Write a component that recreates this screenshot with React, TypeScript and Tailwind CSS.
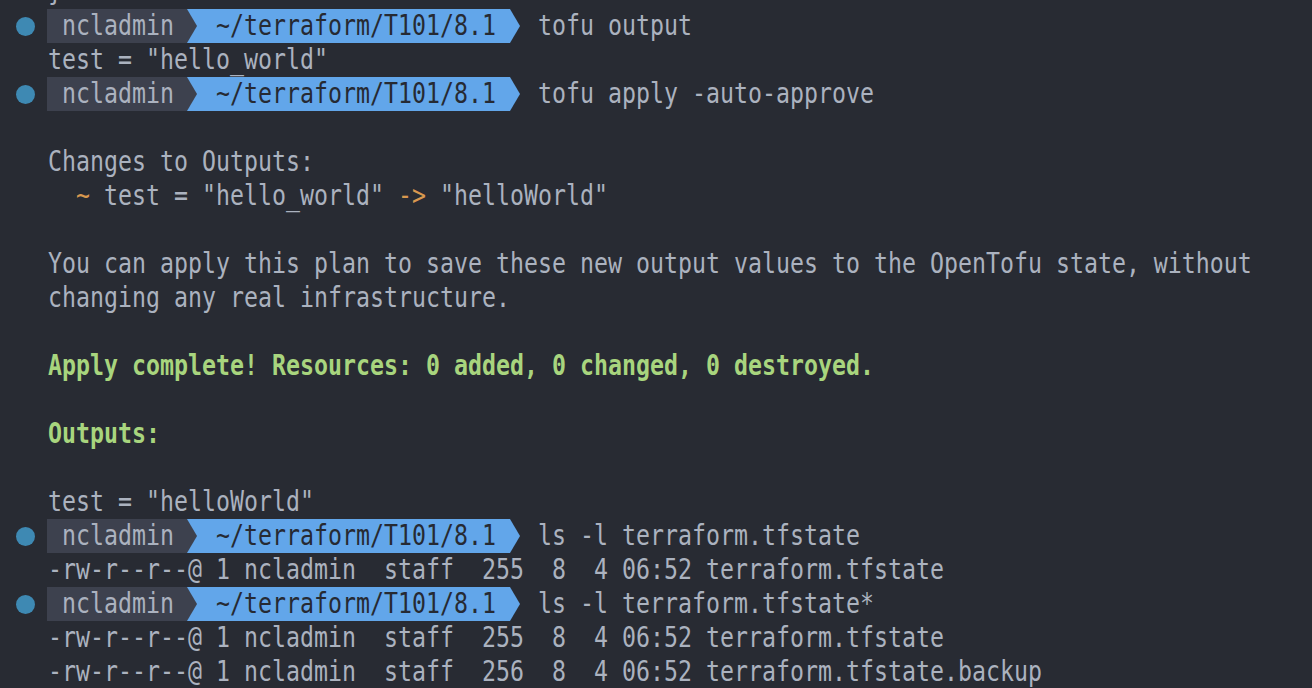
import React from "react";

const FONT = "font-['DejaVu_Sans_Mono',monospace] text-[28px] leading-[34px]";

function S({ children, className = "" }: { children: React.ReactNode; className?: string }) {
  return (
    <span className={"inline-block origin-left scale-x-[0.8304] whitespace-pre " + className}>
      {children}
    </span>
  );
}

function Line({ children }: { children?: React.ReactNode }) {
  return (
    <div className="h-[34px] pl-[48px] whitespace-pre overflow-visible">
      <S>{children ?? " "}</S>
    </div>
  );
}

function Prompt({ cmd }: { cmd: string }) {
  return (
    <div className="h-[34px] flex items-stretch">
      <div className="w-[47px] shrink-0 flex items-center">
        <div className="ml-[15.5px] w-[19px] h-[19px] rounded-full bg-[#3e89b3]" />
      </div>
      <div className="relative z-10 w-[150px] shrink-0 bg-[#3d414e] pl-[15px] text-[#abb2bf] [clip-path:polygon(0_0,140px_0,150px_50%,140px_100%,0_100%)]">
        <S>ncladmin</S>
      </div>
      <div className="-ml-[10px] w-[333px] shrink-0 bg-[#62a6ea] pl-[29px] text-[#262a33] [clip-path:polygon(0_0,323px_0,333px_50%,323px_100%,0_100%)]">
        <S>~/terraform/T101/8.1</S>
      </div>
      <div className="ml-[18px] text-[#abb2bf]">
        <S>{cmd}</S>
      </div>
    </div>
  );
}

export default function App() {
  return (
    <div className={"w-[1312px] h-[688px] overflow-hidden bg-[#282b33] text-[#abb2bf] " + FONT}>
      <div className="-mt-[25px]">
        <Line>{"}"}</Line>
        <Prompt cmd="tofu output" />
        <Line>test = "hello_world"</Line>
        <Prompt cmd="tofu apply -auto-approve" />
        <Line />
        <Line>Changes to Outputs:</Line>
        <Line>
          {"  "}
          <span className="text-[#d8984f]">~</span>
          {' test = "hello_world" '}
          <span className="text-[#d8984f]">-&gt;</span>
          {' "helloWorld"'}
        </Line>
        <Line />
        <Line>You can apply this plan to save these new output values to the OpenTofu state, without</Line>
        <Line>changing any real infrastructure.</Line>
        <Line />
        <Line>
          <span className="font-bold text-[#a8d57e]">Apply complete! Resources: 0 added, 0 changed, 0 destroyed.</span>
        </Line>
        <Line />
        <Line>
          <span className="font-bold text-[#a8d57e]">Outputs:</span>
        </Line>
        <Line />
        <Line>test = "helloWorld"</Line>
        <Prompt cmd="ls -l terraform.tfstate" />
        <Line>-rw-r--r--@ 1 ncladmin  staff  255  8  4 06:52 terraform.tfstate</Line>
        <Prompt cmd="ls -l terraform.tfstate*" />
        <Line>-rw-r--r--@ 1 ncladmin  staff  255  8  4 06:52 terraform.tfstate</Line>
        <Line>-rw-r--r--@ 1 ncladmin  staff  256  8  4 06:52 terraform.tfstate.backup</Line>
      </div>
    </div>
  );
}
